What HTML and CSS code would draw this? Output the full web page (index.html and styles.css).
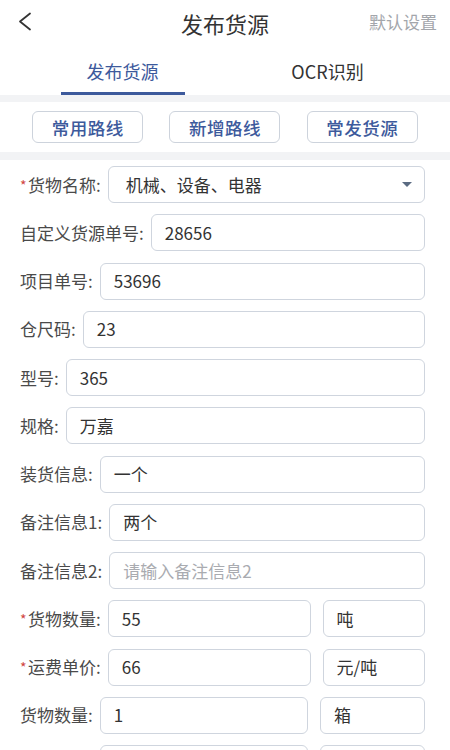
FILE: index.html
```html
<!DOCTYPE html>
<html lang="zh-CN">
<head>
<meta charset="utf-8">
<title>发布货源</title>
<link rel="stylesheet" href="styles.css">
</head>
<body>
<div class="page">
  <header class="topbar">
    <span class="back">
      <svg width="14" height="19" viewBox="0 0 14 19"><path d="M12 1.5 L2 9.5 L12 17.5" fill="none" stroke="#333" stroke-width="1.8" stroke-linecap="round" stroke-linejoin="round"/></svg>
    </span>
    <h1 class="title">发布货源</h1>
    <span class="settings">默认设置</span>
  </header>

  <nav class="tabs">
    <div class="tab active"><span class="tab-label">发布货源</span><span class="tab-bar"></span></div>
    <div class="tab"><span class="tab-label">OCR识别</span><span class="tab-bar"></span></div>
  </nav>

  <div class="band band-top"></div>

  <div class="quick">
    <div class="cell"><span class="qbtn">常用路线</span></div>
    <div class="cell"><span class="qbtn">新增路线</span></div>
    <div class="cell"><span class="qbtn">常发货源</span></div>
  </div>

  <div class="band band-bottom"></div>

  <form class="form">
    <div class="row">
      <label class="label"><span class="req">*</span>货物名称:</label>
      <div class="box select"><span class="val">机械、设备、电器</span><span class="caret"></span></div>
    </div>
    <div class="row">
      <label class="label">自定义货源单号:</label>
      <div class="box"><span class="val">28656</span></div>
    </div>
    <div class="row">
      <label class="label">项目单号:</label>
      <div class="box"><span class="val">53696</span></div>
    </div>
    <div class="row">
      <label class="label">仓尺码:</label>
      <div class="box"><span class="val">23</span></div>
    </div>
    <div class="row">
      <label class="label">型号:</label>
      <div class="box"><span class="val">365</span></div>
    </div>
    <div class="row">
      <label class="label">规格:</label>
      <div class="box"><span class="val">万嘉</span></div>
    </div>
    <div class="row">
      <label class="label">装货信息:</label>
      <div class="box"><span class="val">一个</span></div>
    </div>
    <div class="row">
      <label class="label">备注信息1:</label>
      <div class="box"><span class="val">两个</span></div>
    </div>
    <div class="row">
      <label class="label">备注信息2:</label>
      <div class="box"><span class="val placeholder">请输入备注信息2</span></div>
    </div>
    <div class="row">
      <label class="label"><span class="req">*</span>货物数量:</label>
      <div class="box main"><span class="val">55</span></div>
      <div class="box unit"><span class="val">吨</span></div>
    </div>
    <div class="row">
      <label class="label"><span class="req">*</span>运费单价:</label>
      <div class="box main"><span class="val">66</span></div>
      <div class="box unit"><span class="val">元/吨</span></div>
    </div>
    <div class="row">
      <label class="label">货物数量:</label>
      <div class="box main"><span class="val">1</span></div>
      <div class="box unit"><span class="val">箱</span></div>
    </div>
    <div class="row">
      <span class="label label-blank"></span>
      <div class="box main"></div>
      <div class="box unit"></div>
    </div>
  </form>
</div>
</body>
</html>
```

FILE: styles.css
```css
* { box-sizing: border-box; }

html, body {
  margin: 0;
  padding: 0;
  background: #ffffff;
}

body {
  font-family: "Noto Sans CJK SC", "Noto Sans", sans-serif;
  color: #333;
  width: 450px;
  overflow: hidden;
}

.page {
  width: 450px;
}

/* header */
.topbar {
  height: 45px;
  display: flex;
  align-items: center;
  justify-content: center;
  position: relative;
}

.back {
  position: absolute;
  left: 18px;
  top: 12px;
  width: 14px;
  height: 19px;
  display: block;
}
.back svg { display: block; }

.title {
  margin: 0;
  font-size: 22px;
  font-weight: 400;
  color: #333;
  line-height: 28px;
}

.settings {
  position: absolute;
  right: 13px;
  top: 10px;
  font-size: 17px;
  line-height: 24px;
  color: #a3a6ab;
}

/* tabs */
.tabs {
  height: 50px;
  display: flex;
  padding: 0 20px;
}

.tab {
  flex: 1;
  display: flex;
  flex-direction: column;
  align-items: center;
  padding-top: 14px;
}

.tab-label {
  font-size: 18px;
  line-height: 24px;
  color: #333;
}

.tab-bar {
  width: 124px;
  height: 2.5px;
  margin-top: 9px;
  background: transparent;
}

.tab.active .tab-label { color: #3d5a9c; }
.tab.active .tab-bar { background: #3d5a9c; }

/* grey separators */
.band { background: #f2f3f5; }
.band-top { height: 7px; }
.band-bottom { height: 8px; }

/* quick buttons */
.quick {
  display: grid;
  grid-template-columns: repeat(3, 1fr);
  padding: 9px 19px;
}

.cell {
  display: flex;
  justify-content: center;
}

.qbtn {
  width: 111px;
  height: 32px;
  border: 1px solid #cdd3dc;
  border-radius: 6px;
  display: flex;
  align-items: center;
  justify-content: center;
  font-size: 17.5px;
  font-weight: 500;
  color: #3d5a9c;
  letter-spacing: 0.5px;
}

/* form */
.form {
  padding: 6px 25px 0 20px;
  display: flex;
  flex-direction: column;
  gap: 11.25px;
}

.row {
  display: flex;
  align-items: center;
  gap: 12px;
  height: 37px;
}

.label {
  font-size: 17px;
  color: #4a4a4a;
  white-space: nowrap;
  line-height: 24px;
  margin-right: -5px;
}

.label-blank {
  width: 73px;
  height: 24px;
}

.req {
  color: #d0453f;
  font-size: 14px;
  display: inline-block;
  width: 8px;
  vertical-align: 1px;
}

.box {
  flex: 1 1 0;
  height: 37px;
  border: 1px solid #cfd5de;
  border-radius: 6px;
  background: #fff;
  display: flex;
  align-items: center;
  padding: 0;
  min-width: 0;
}

.box.main { flex: 2 1 0; }
.box.unit { flex: 1 1 0; }

.box.select { justify-content: space-between; padding-right: 12px; }
.box.select .val { padding-left: 17px; }

.val {
  font-size: 17px;
  line-height: 24px;
  color: #333;
  white-space: nowrap;
  padding-left: 13px;
}

.val.placeholder { color: #a9abb0; }

.caret {
  width: 0;
  height: 0;
  border-left: 5.5px solid transparent;
  border-right: 5.5px solid transparent;
  border-top: 5.5px solid #5b6b82;
}
```
